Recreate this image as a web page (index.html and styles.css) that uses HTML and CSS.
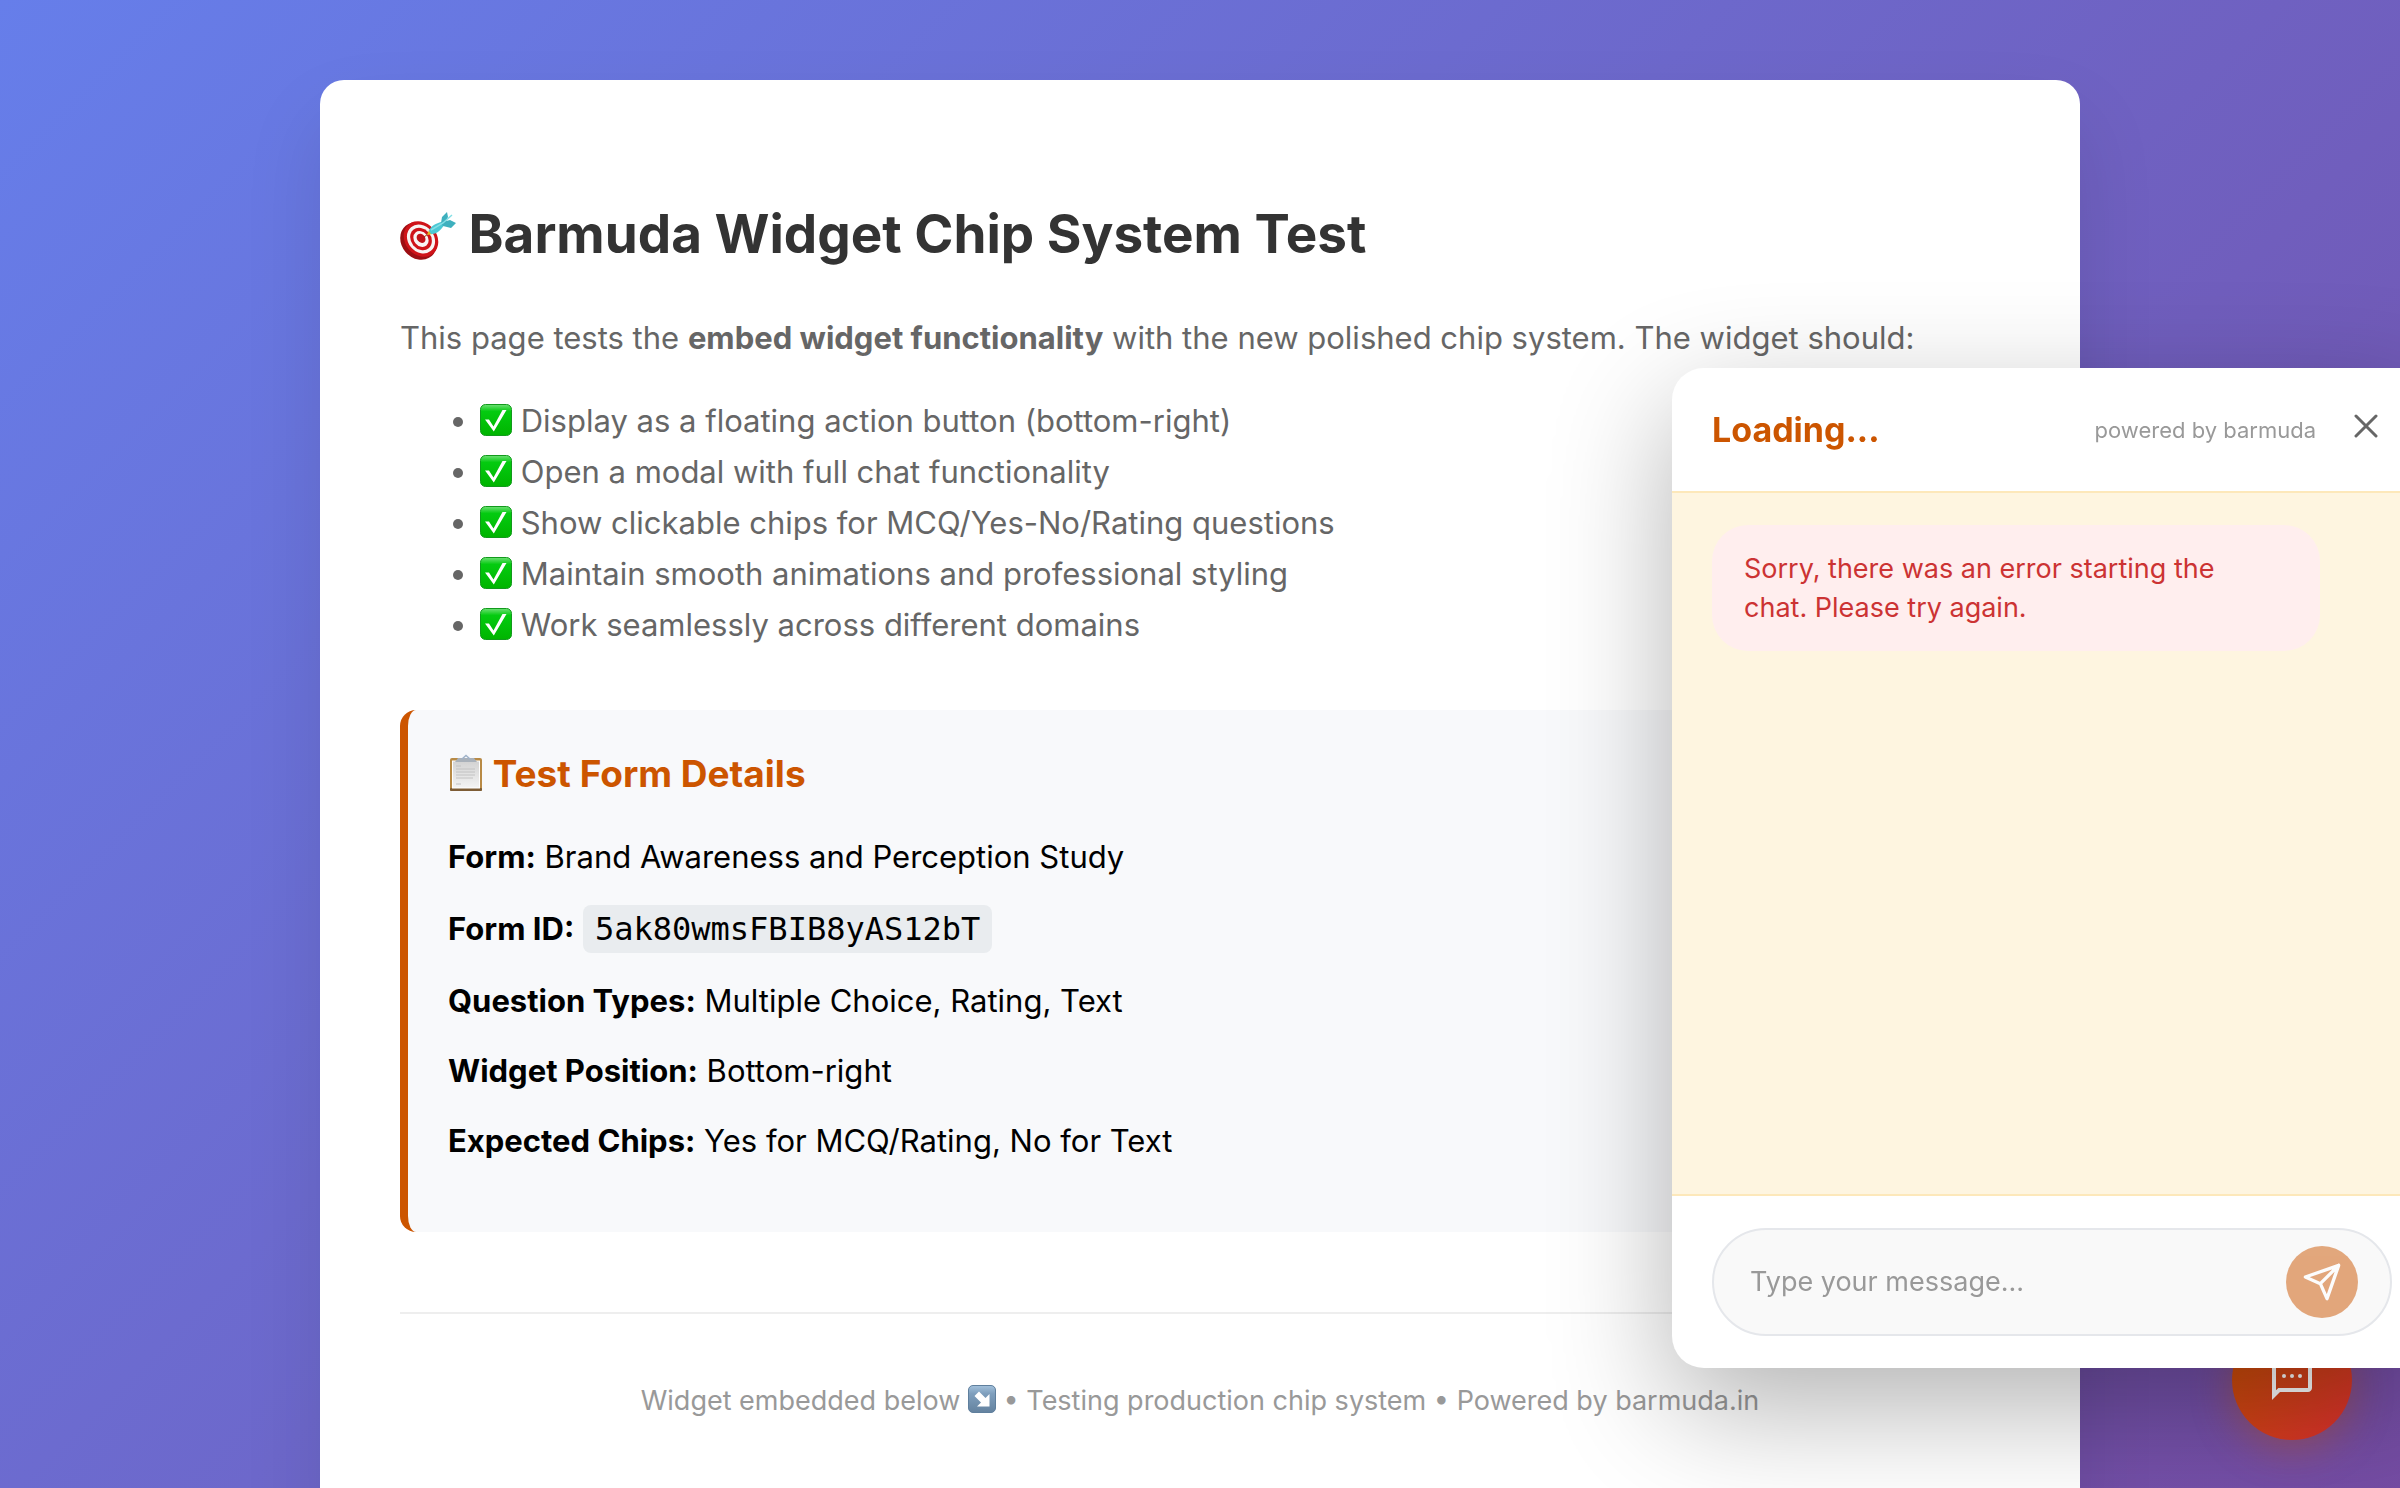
FILE: index.html
```html
<!DOCTYPE html>
<html lang="en">
<head>
<meta charset="utf-8">
<meta name="viewport" content="width=device-width, initial-scale=1">
<title>Barmuda Widget Chip System Test</title>
<link rel="stylesheet" href="styles.css">
</head>
<body>
<svg class="defs" aria-hidden="true">
  <defs>
    <linearGradient id="green" x1="0" y1="0" x2="0" y2="1">
      <stop offset="0" stop-color="#6fe076"/><stop offset=".22" stop-color="#04cb10"/><stop offset="1" stop-color="#00b400"/>
    </linearGradient>
    <linearGradient id="slate" x1="0" y1="0" x2="0" y2="1">
      <stop offset="0" stop-color="#a3c1dc"/><stop offset=".3" stop-color="#7f9fbd"/><stop offset="1" stop-color="#64829f"/>
    </linearGradient>
    <linearGradient id="paper" x1="0" y1="0" x2="0" y2="1">
      <stop offset="0" stop-color="#d2d2d2"/><stop offset="1" stop-color="#f4f4f4"/>
    </linearGradient>
    <symbol id="check" viewBox="0 0 32 32">
      <rect x=".5" y=".5" width="31" height="31" rx="5" fill="url(#green)" stroke="#129a1c"/>
      <path d="M5 15.500 9 15.500 13.500 22.500 22.500 6 26.500 6 13.800 27.500Z" fill="#fff"/>
    </symbol>
  </defs>
</svg>

<main class="card">
  <h1><svg class="emoji-dart" viewBox="0 0 56 48" role="img" aria-label="Direct hit">
      <ellipse cx="18.500" cy="29" rx="17" ry="20" transform="rotate(-40 18.500 29)" fill="#9c0e13"/>
      <g transform="rotate(-40 21 27)">
        <ellipse cx="21" cy="27" rx="16" ry="19" fill="#cf1319"/>
        <ellipse cx="21" cy="27" rx="13" ry="15.500" fill="#f8f4f4"/>
        <ellipse cx="21" cy="27" rx="10" ry="12" fill="#cf1319"/>
        <ellipse cx="21" cy="27" rx="7" ry="8.500" fill="#f8f4f4"/>
        <ellipse cx="21.500" cy="26.500" rx="4" ry="5" fill="#c01218"/>
      </g>
      <path d="M24 25 28 22" stroke="#8d3b12" stroke-width="1"/>
      <path d="M27 23 29 18 33 22Z" fill="#e9b41e"/>
      <path d="M29 19C30 14 37 11 41 10L44 13C42 17 36 23 31 22Z" fill="#4cc8d4"/>
      <path d="M41 11 42 5 47 0 48 5 46 9 50 8 56 11 51 16 43 14Z" fill="#3eb0be"/>
      <path d="M31 18 43 11 52 3" fill="none" stroke="#82dfe6" stroke-width="1.500"/>
    </svg> Barmuda Widget Chip System Test</h1>
  <p class="lead">This page tests the <strong>embed widget functionality</strong> with the new polished chip system. The widget should:</p>
  <ul class="features">
    <li><svg class="emoji-check" role="img" aria-label="Done"><use href="#check"/></svg> Display as a floating action button (bottom-right)</li>
    <li><svg class="emoji-check" role="img" aria-label="Done"><use href="#check"/></svg> Open a modal with full chat functionality</li>
    <li><svg class="emoji-check" role="img" aria-label="Done"><use href="#check"/></svg> Show clickable chips for MCQ/Yes-No/Rating questions</li>
    <li><svg class="emoji-check" role="img" aria-label="Done"><use href="#check"/></svg> Maintain smooth animations and professional styling</li>
    <li><svg class="emoji-check" role="img" aria-label="Done"><use href="#check"/></svg> Work seamlessly across different domains</li>
  </ul>

  <section class="details">
    <h3><svg class="emoji-clip" viewBox="0 0 36 38" role="img" aria-label="Clipboard">
        <rect x="2" y="4" width="32" height="33" rx="2" fill="#b88a45"/>
        <rect x="2" y="34" width="32" height="3" rx="1" fill="#7d5c35"/>
        <rect x="4.500" y="7" width="27" height="27" fill="url(#paper)" stroke="#fff"/>
        <path d="M8 12h5M8 15h19M8 18h19M8 21h19M8 24h17M8 30h5" stroke="#c2c2c2" stroke-width="1"/>
        <path d="M7 8 10 4h16l3 4Z" fill="#a9b1ba"/>
        <path d="M14 5 18 1.500 22 5" fill="none" stroke="#9fb2c9" stroke-width="1.500"/>
      </svg> Test Form Details</h3>
    <p><strong>Form:</strong> Brand Awareness and Perception Study</p>
    <p><strong>Form ID:</strong> <code>5ak80wmsFBIB8yAS12bT</code></p>
    <p><strong>Question Types:</strong> Multiple Choice, Rating, Text</p>
    <p><strong>Widget Position:</strong> Bottom-right</p>
    <p><strong>Expected Chips:</strong> Yes for MCQ/Rating, No for Text</p>
  </section>

  <footer class="foot">
    <p>Widget embedded below <svg class="emoji-arrow" viewBox="0 0 28 28" role="img" aria-label="Down-right arrow">
        <rect x=".5" y=".5" width="27" height="27" rx="4.500" fill="url(#slate)" stroke="#5f7f9d"/>
        <path d="M6.500 11 11 6.500 17.500 13 21.500 9V21.500H9L13 17.500Z" fill="#fff"/>
      </svg> • Testing production chip system • Powered by barmuda.in</p>
  </footer>
</main>

<button class="fab" type="button" aria-label="Open chat">
  <svg viewBox="0 0 24 24" fill="#fff"><path d="M20 2H4c-1.100 0-2 .9-2 2v18l4-4h14c1.100 0 2-.9 2-2V4c0-1.100-.9-2-2-2zm0 14H5.170L4 17.170V4h16v12z"/><circle cx="8" cy="10" r="1"/><circle cx="12" cy="10" r="1"/><circle cx="16" cy="10" r="1"/></svg>
</button>

<aside class="chat" role="dialog" aria-labelledby="chat-title">
  <header class="chat-head">
    <h2 id="chat-title">Loading...</h2>
    <span class="powered">powered by barmuda</span>
    <button class="close" type="button" aria-label="Close chat">
      <svg viewBox="0 0 24 24" fill="none" stroke="#666" stroke-width="3" stroke-linecap="round"><path d="M2 2 22 22M22 2 2 22"/></svg>
    </button>
  </header>
  <div class="chat-body">
    <p class="error">Sorry, there was an error starting the chat. Please try again.</p>
  </div>
  <form class="chat-form">
    <div class="pill">
      <input type="text" placeholder="Type your message..." aria-label="Message">
      <button class="send" type="submit" aria-label="Send" disabled>
        <svg viewBox="0 0 24 24" fill="none" stroke="#fff" stroke-width="2" stroke-linecap="round" stroke-linejoin="round"><path d="M22 2 11 13M22 2 15 22 11 13 2 9Z"/></svg>
      </button>
    </div>
  </form>
</aside>
</body>
</html>
```
FILE: styles.css
```css
* { box-sizing: border-box; }

html { scrollbar-width: none; }

body {
  margin: 0;
  min-height: 100vh;
  padding: 80px;
  font-family: Inter, "Liberation Sans", sans-serif;
  font-size: 31px;
  line-height: 38px;
  color: #000;
  background: linear-gradient(135deg, #667eea 0%, #764ba2 100%);
}

.defs { position: absolute; width: 0; height: 0; }

.card {
  max-width: 1760px;
  margin: 0 auto;
  padding: 80px;
  background: #fff;
  border-radius: 24px;
  box-shadow: 0 40px 80px rgba(0, 0, 0, .1);
}

h1, h2, h3, p, ul { margin: 0; }

h1 {
  margin: 38px 0 42px;
  font-size: 53px;
  line-height: 72px;
  color: #333;
}

.lead, .features { line-height: 51px; color: #666; }
.features { margin: 32px 0 60px; padding-left: 80px; }

.emoji-dart { width: 56px; height: 48px; vertical-align: -7px; }
.emoji-check { width: 32px; height: 32px; vertical-align: -4px; }
.emoji-clip { width: 36px; height: 38px; vertical-align: -5px; }
.emoji-arrow { width: 28px; height: 28px; vertical-align: -3px; }

.details {
  padding: 40px;
  background: #f8f9fb;
  border-left: 8px solid #cc5500;
  border-radius: 16px;
}
.details h3 {
  margin-bottom: 40px;
  font-size: 37px;
  line-height: 48px;
  color: #cc5500;
}
.details p { margin-bottom: 32px; }

code {
  padding: 5px 12px;
  font: 32px/42px "DejaVu Sans Mono", monospace;
  background: #e9ecef;
  border-radius: 8px;
}

.foot {
  margin-top: 80px;
  padding: 64px 0 28px;
  border-top: 2px solid #eee;
  font-size: 27px;
  line-height: 45px;
  text-align: center;
  color: #999;
}

button { border: 0; padding: 0; cursor: pointer; }

.fab {
  position: fixed;
  right: 48px;
  bottom: 48px;
  display: flex;
  align-items: center;
  justify-content: center;
  width: 120px;
  height: 120px;
  border-radius: 50%;
  background: linear-gradient(135deg, #cc5500, #dc2f2f);
  box-shadow: 0 8px 40px rgba(204, 85, 0, .4);
}
.fab svg { width: 48px; height: 48px; }

.chat {
  position: fixed;
  right: -32px;
  bottom: 120px;
  display: flex;
  flex-direction: column;
  width: 760px;
  height: 1000px;
  max-height: 90vh;
  overflow: hidden;
  background: #fff;
  border-radius: 32px;
  box-shadow: 0 40px 120px rgba(0, 0, 0, .3);
}

.chat-head {
  display: flex;
  align-items: center;
  padding: 40px;
  border-bottom: 2px solid #fde8ba;
}
.chat-head h2 { flex: 1; font-size: 34px; line-height: 43px; color: #cc5500; }
.powered { font-size: 22px; color: #999; }
.close { margin: 0 14px 8px 38px; width: 24px; height: 24px; background: none; }
.close svg { display: block; width: 24px; height: 24px; }

.chat-body { flex: 1; padding: 32px 40px; background: #fef5e0; }
.error {
  max-width: 608px;
  padding: 24px 40px 24px 32px;
  font-size: 27px;
  line-height: 39px;
  color: #cc3333;
  background: #ffeeee;
  border-radius: 36px;
}

.chat-form { padding: 32px 40px; border-top: 2px solid #fde8ba; }
.pill {
  display: flex;
  align-items: center;
  gap: 16px;
  padding: 16px 32px 16px 36px;
  border: 2px solid #e5e7eb;
  border-radius: 54px;
  background: #f9f9f9;
}
.pill input {
  flex: 1;
  min-width: 0;
  padding: 0;
  border: 0;
  outline: 0;
  background: none;
  font: 27px/40px Inter, "Liberation Sans", sans-serif;
}
.pill input::placeholder { color: #999; }
.send {
  display: flex;
  align-items: center;
  justify-content: center;
  width: 72px;
  height: 72px;
  border-radius: 50%;
  background: #cc5500;
  opacity: .5;
}
.send svg { width: 40px; height: 40px; }
```
